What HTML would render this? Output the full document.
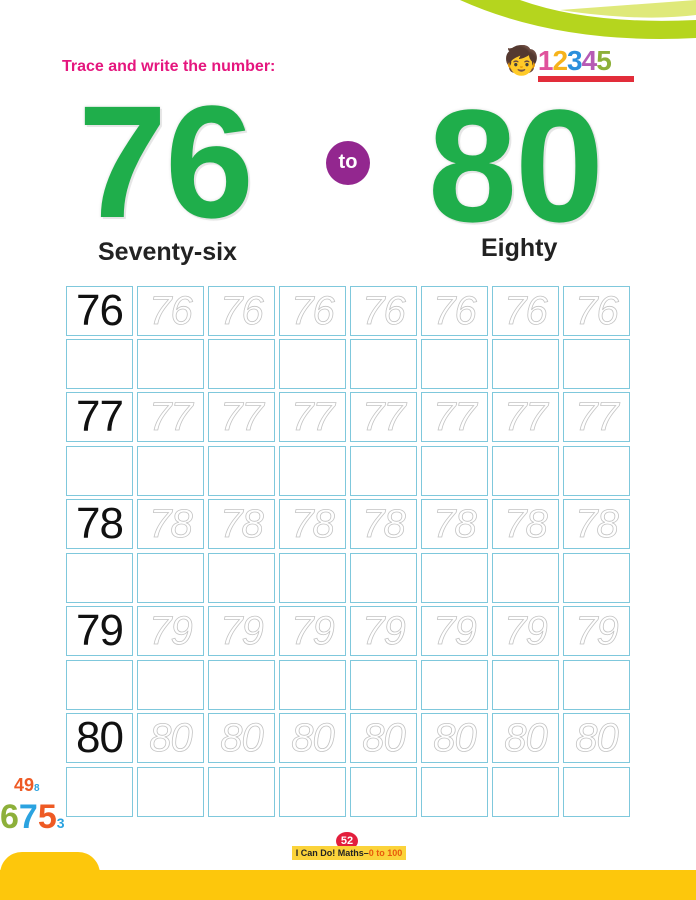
<!DOCTYPE html>
<html><head><style>
body{margin:0;width:696px;height:900px;position:relative;background:#fff;overflow:hidden;font-family:"Liberation Sans",sans-serif}
.a{position:absolute}
.big{position:absolute;font-weight:bold;color:#1fae4b;font-size:160px;line-height:1;letter-spacing:-2px;text-shadow:0 0 3px #ddd,2px 2px 0 #e8e8e8}
.cell{position:absolute;width:65px;height:48px;border:1.5px solid #7fc8dc;box-sizing:content-box;display:flex;align-items:center;justify-content:center}
.s{font-size:44px;color:#111;letter-spacing:-1px}
.t{font-size:40px;color:transparent;-webkit-text-stroke:0.8px #c4c4c4;letter-spacing:-1px;font-style:italic}
</style></head><body>
<svg class="a" style="left:440px;top:0" width="256" height="50"><path d="M20 0 Q120 45 256 38 L256 20 Q150 25 80 0Z" fill="#b5d51e"/><path d="M120 10 Q200 22 256 15 L256 0Z" fill="#dfe97a"/></svg>
<div class="a" style="left:62px;top:58px;color:#e5167e;font-weight:bold;font-size:16px">Trace and write the number:</div>
<div class="a" style="left:504px;top:44px;font-size:28px;font-weight:bold;letter-spacing:-1px"><span style="color:#f0609a">🧒</span><span style="color:#e0529c">1</span><span style="color:#f6b31b">2</span><span style="color:#2b8fdc">3</span><span style="color:#b65ab4">4</span><span style="color:#8db03a">5</span></div>
<div class="a" style="left:538px;top:76px;width:96px;height:6px;background:#e22d3a"></div>
<div class="big" style="left:78px;top:82px">76</div>
<div class="big" style="left:428px;top:86px">80</div>
<div class="a" style="left:326px;top:141px;width:44px;height:44px;border-radius:50%;background:#93278f;color:#fff;font-weight:bold;font-size:20px;text-align:center;line-height:42px">to</div>
<div class="a" style="left:98px;top:238px;font-weight:bold;font-size:25px;color:#222">Seventy-six</div>
<div class="a" style="left:481px;top:234px;font-weight:bold;font-size:25px;color:#222">Eighty</div>
<div id="g"></div>
<div class="a" style="left:0;top:870px;width:696px;height:30px;background:#fdc70c"></div>
<div class="a" style="left:0;top:800px;font-weight:bold;font-size:34px;line-height:1"><span style="color:#8db03a">6</span><span style="color:#2ba3e0">7</span><span style="color:#ee5a24">5</span><span style="color:#2ba3e0;font-size:14px">3</span></div>
<div class="a" style="left:14px;top:775px;font-weight:bold;font-size:18px;color:#ee5a24">49<span style="font-size:10px;color:#2ba3e0">8</span></div>
<div class="a" style="left:0;top:852px;width:100px;height:22px;background:#fdc70c;border-radius:30px 30px 0 0"></div>
<div class="a" style="left:336px;top:832px;width:22px;height:18px;border-radius:50%;background:#e31e3c;color:#fff;font-size:11px;font-weight:bold;text-align:center;line-height:18px">52</div>
<div class="a" style="left:292px;top:846px;width:114px;height:14px;background:#fbd33a;font-size:9px;font-weight:bold;text-align:center;line-height:14px;color:#222">I Can Do! Maths–<span style="color:#e85a0c">0 to 100</span></div>
<script>
var g=document.getElementById('g'),h='';
var rows=[286,339,392,446,499,553,606,660,713,767],n=['76','77','78','79','80'];
for(var r=0;r<10;r++)for(var c=0;c<8;c++){var x=66+c*71,txt='';
if(r%2==0){txt=c==0?'<span class="s">'+n[r/2]+'</span>':'<span class="t">'+n[r/2]+'</span>';}
h+='<div class="cell" style="left:'+x+'px;top:'+rows[r]+'px">'+txt+'</div>';}
g.innerHTML=h;
</script>
</body></html>
